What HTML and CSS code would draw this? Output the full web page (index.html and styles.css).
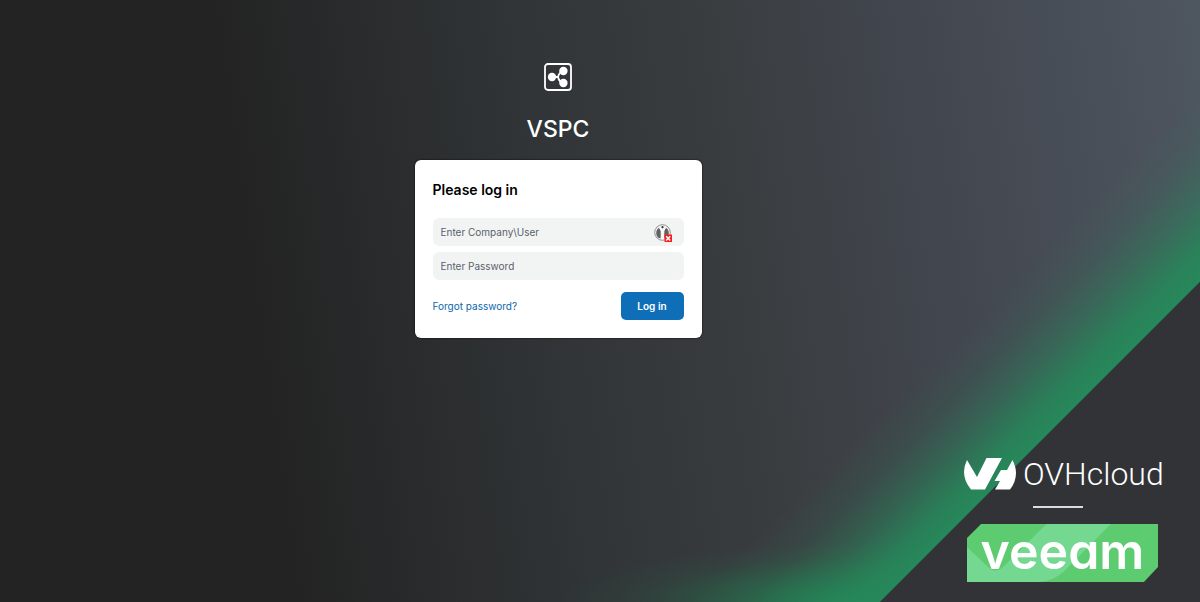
FILE: index.html
```html
<!DOCTYPE html>
<html lang="en">
<head>
  <meta charset="UTF-8">
  <meta name="viewport" content="width=device-width, initial-scale=1.0">
  <title>VSPC - Log in</title>
  <link rel="stylesheet" href="styles.css">
</head>
<body>
  <main class="login">
    <svg class="login-icon" viewBox="0 0 28 28" aria-hidden="true">
      <rect x="1" y="1" width="26" height="26" rx="3" fill="none" stroke="#fff" stroke-width="1.8"/>
      <path d="M8 14h6M19 8q-4 1.500-5 6 1 4.500 5 6" fill="none" stroke="#fff" stroke-width="1.800"/>
      <circle cx="8" cy="14" r="4.200" fill="#fff"/>
      <circle cx="19.400" cy="8" r="4.200" fill="#fff"/>
      <circle cx="19.400" cy="20" r="4.200" fill="#fff"/>
    </svg>
    <h1>VSPC</h1>
    <form class="card">
      <h2>Please log in</h2>
      <div class="field">
        <input type="text" id="user" aria-label="Company\User" placeholder="Enter Company\User">
        <svg class="field-icon" viewBox="0 0 18 18" aria-hidden="true">
          <circle cx="8.500" cy="8.500" r="7.800" fill="#f4f4f4" stroke="#777" stroke-width=".8"/>
          <path d="M5.500 3.500Q2.200 5 2.200 9t3.300 5.300h1.200V7.500zM11.500 3.500Q14.800 5 14.800 9t-3.300 5.300h-1.200V7.500z" fill="#626262"/>
          <path d="M5.500 3.500 8.500 7l3-3.500M8.500 7v7.500" fill="none" stroke="#fff" stroke-width="1.500"/>
          <circle cx="8.500" cy="3.200" r="1.100" fill="#333"/>
          <rect x="10.500" y="10.500" width="7.500" height="7.500" fill="#ff1a1a"/>
          <path d="m12.200 12.200 4 4.200m0-4.200-4 4.200" stroke="#fff" stroke-width="1.500"/>
        </svg>
      </div>
      <div class="field">
        <input type="password" id="password" aria-label="Password" placeholder="Enter Password">
      </div>
      <div class="actions">
        <a href="#">Forgot password?</a>
        <button type="submit">Log in</button>
      </div>
    </form>
  </main>

  <aside class="brands">
    <div class="ovh">
      <svg class="ovh-mark" viewBox="0 0 52 32" aria-hidden="true">
        <path d="M3 2 13 19 22.500 0H38L21 31.500H7Q0 23 0 14 0 8 3 2Z" fill="#fff"/>
        <path d="M48.500 2Q52 9 52 15q0 9-6 16.500H31l5-8.500h-5.500L37 12h6Z" fill="#fff"/>
      </svg>
      <span>OVHcloud</span>
    </div>
    <hr>
    <div class="veeam">
      <svg class="veeam-bg" viewBox="0 0 190 58" preserveAspectRatio="none" aria-hidden="true">
        <path d="M14 0H190V43L176 58H0V14Z" fill="#5dcb70"/>
        <path d="M0 23 21 43q7 7 15 0L79 0h64L98 46q-12 12-28 12H0Z" fill="#74d891"/>
      </svg>
      <span>veeam</span>
    </div>
  </aside>
</body>
</html>
```

FILE: styles.css
```css
* {
  box-sizing: border-box;
}
body {
  display: grid;
  min-height: 100vh;
  margin: 0;
  font-family: Inter, sans-serif;
  color: #000;
  background:
    linear-gradient(315deg, #323337 226px, #26885a 227px, rgba(38, 136, 90, 0.88) 248px, rgba(38, 136, 90, 0.45) 284px, rgba(38, 136, 90, 0.14) 318px, rgba(38, 136, 90, 0) 360px),
    radial-gradient(320px 60px at calc(100% - 320px) 100%, rgba(20, 156, 88, 0.75), rgba(20, 156, 88, 0.3) 45%, rgba(20, 156, 88, 0.08) 75%, rgba(20, 156, 88, 0)),
    linear-gradient(82deg, #232323 23%, #313537 47%, #3a3d40 62%, #434750 79%, #4e5660 100%);
}
.login,
.brands {
  grid-area: 1 / 1;
}
.login {
  display: flex;
  flex-direction: column;
  align-items: center;
  padding: 63px 84px 24px 0;
}
.login-icon {
  width: 28px;
  height: 28px;
}
h1 {
  margin: 24px 0 17px;
  font-size: 23px;
  line-height: 28px;
  font-weight: 500;
  color: #fff;
}
.card {
  width: 287px;
  padding: 18px;
  background: #fff;
  border-radius: 6px;
  box-shadow: 0 0 2px #000;
}
h2 {
  margin: 0 0 16px;
  font-size: 14px;
  line-height: 24px;
  font-weight: 600;
}
.field {
  position: relative;
  margin-bottom: 6px;
}
input {
  display: block;
  width: 100%;
  height: 28px;
  padding: 0 8px;
  border: none;
  border-radius: 6px;
  background: #f2f4f4;
  font-family: inherit;
  font-size: 10px;
}
input::placeholder {
  color: #5a5f6b;
}
.field-icon {
  position: absolute;
  top: 6px;
  right: 12px;
  width: 18px;
  height: 18px;
}
.actions {
  display: flex;
  justify-content: space-between;
  align-items: center;
  margin-top: 12px;
}
.actions a {
  font-size: 10px;
  color: #0b66ad;
  text-decoration: none;
}
button {
  width: 63px;
  height: 28px;
  padding: 0;
  border: none;
  border-radius: 5px;
  background: #0e6fb8;
  color: #fff;
  font-family: inherit;
  font-size: 10px;
  font-weight: 600;
  cursor: pointer;
}
.brands {
  place-self: end;
  width: 236px;
  padding-bottom: 20px;
}
.ovh {
  display: flex;
  align-items: center;
  gap: 7px;
  height: 32px;
  color: #fff;
  font-family: Roboto, sans-serif;
  font-size: 32px;
  font-weight: 300;
}
.ovh-mark {
  width: 52px;
  height: 32px;
}
hr {
  width: 50px;
  height: 2px;
  margin: 16px 0 16px 69px;
  border: none;
  background: #dcdcdc;
}
.veeam {
  display: grid;
  width: 191px;
  height: 58px;
  margin-left: 3px;
  place-items: center;
  color: #fff;
  font-size: 50px;
  line-height: 40px;
  font-weight: 600;
  font-feature-settings: "cv11";
}
.veeam-bg,
.veeam span {
  grid-area: 1 / 1;
}
.veeam span {
  padding-bottom: 4px;
}
.veeam-bg {
  width: 100%;
  height: 58px;
}
```
